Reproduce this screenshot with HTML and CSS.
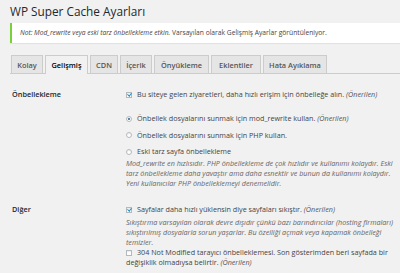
FILE: index.html
```html
<!DOCTYPE html>
<html lang="tr">
<head>
<meta charset="utf-8">
<title>WP Super Cache Ayarları</title>
<link rel="stylesheet" href="styles.css">
</head>
<body>
<div class="wrap">
  <h1 class="title">WP Super Cache Ayarları</h1>
  <div class="notice">
    <p><em>Not: Mod_rewrite veya eski tarz önbellekleme etkin.</em> Varsayılan olarak Gelişmiş Ayarlar görüntüleniyor.</p>
  </div>
  <nav class="tabs">
    <a class="tab">Kolay</a>
    <a class="tab active">Gelişmiş</a>
    <a class="tab">CDN</a>
    <a class="tab">İçerik</a>
    <a class="tab">Önyükleme</a>
    <a class="tab">Eklentiler</a>
    <a class="tab">Hata Ayıklama</a>
  </nav>

  <section class="row row-cache">
    <div class="label">Önbellekleme</div>
    <div class="field">
      <p class="line"><span class="cb checked"></span>Bu siteye gelen ziyaretleri, daha hızlı erişim için önbelleğe alın. <em class="rec">(Önerilen)</em></p>
      <ul class="radios">
        <li class="line"><span class="rb checked"></span>Önbellek dosyalarını sunmak için mod_rewrite kullan. <em class="rec">(Önerilen)</em></li>
        <li class="line"><span class="rb"></span>Önbellek dosyalarını sunmak için PHP kullan.</li>
        <li class="line"><span class="rb"></span>Eski tarz sayfa önbellekleme</li>
      </ul>
      <p class="desc">Mod_rewrite en hızlısıdır. PHP önbellekleme de çok hızlıdır ve kullanımı kolaydır. Eski tarz önbellekleme daha yavaştır ama daha esnektir ve bunun da kullanımı kolaydır. Yeni kullanıcılar PHP önbelleklemeyi denemelidir.</p>
    </div>
  </section>

  <section class="row row-other">
    <div class="label">Diğer</div>
    <div class="field">
      <p class="line"><span class="cb checked"></span>Sayfalar daha hızlı yüklensin diye sayfaları sıkıştır. <em class="rec">(Önerilen)</em></p>
      <p class="desc desc2">Sıkıştırma varsayılan olarak devre dışıdır çünkü bazı barındırıcılar (hosting firmaları) sıkıştırılmış dosyalarla sorun yaşarlar. Bu özelliği açmak veya kapamak önbelleği temizler.</p>
      <p class="line wrapline"><span class="cb"></span>304 Not Modified tarayıcı önbelleklemesi. Son gösterimden beri sayfada bir değişiklik olmadıysa belirtir. <em class="rec">(Önerilen)</em></p>
    </div>
  </section>
</div>
</body>
</html>
```

FILE: styles.css
```css
html, body {
  margin: 0;
  padding: 0;
}
body {
  background: #f1f1f1;
  color: #444;
  font-family: "Open Sans", "Noto Sans", sans-serif;
  font-size: 7.2px;
  line-height: 10px;
  overflow: hidden;
}
.wrap {
  padding: 0 0 0 10px;
}
.title {
  margin: 0;
  height: 23px;
  padding-top: 3px;
  box-sizing: border-box;
  font-size: 11.8px;
  line-height: 16px;
  font-weight: 400;
  color: #23282d;
}
.notice {
  margin-right: -10px;
  height: 20px;
  background: #fff;
  border-left: 2px solid #7ad03a;
  box-shadow: 0 1px 1px rgba(0,0,0,.06);
  display: flex;
  align-items: center;
  padding-left: 8px;
}
.notice p {
  margin: 0;
  font-size: 6.7px;
  color: #444;
}
.tabs {
  margin-top: 12px;
  margin-right: -10px;
  display: flex;
  gap: 2px;
  padding-left: 1px;
  border-bottom: 1px solid #ccc;
  height: 18px;
}
.tab {
  display: flex;
  align-items: center;
  justify-content: center;
  height: 18px;
  box-sizing: border-box;
  padding: 0 4px;
  border: 1px solid #ccc;
  border-bottom: none;
  background: #e5e5e5;
  color: #555;
  font-size: 7.4px;
  font-weight: 600;
  white-space: nowrap;
}
.tab:nth-child(1) { width: 32px; }
.tab:nth-child(2) { width: 43px; }
.tab:nth-child(3) { width: 28px; }
.tab:nth-child(4) { width: 32px; }
.tab:nth-child(5) { width: 55px; }
.tab:nth-child(6) { width: 50px; }
.tab:nth-child(7) { width: 64px; }
.tab.active {
  background: #f1f1f1;
  color: #000;
  height: 19px;
}
.row {
  display: grid;
  grid-template-columns: 116px 1fr;
}
.row-cache {
  margin-top: 15px;
}
.row-other {
  margin-top: 16px;
}
.label {
  padding-left: 2px;
  font-weight: 600;
  color: #23282d;
  font-size: 7.3px;
}
.field p, .field ul {
  margin: 0;
  padding: 0;
  list-style: none;
}
.line {
  line-height: 10px;
}
.radios {
  margin-top: 14px !important;
  display: flex;
  flex-direction: column;
  gap: 6.5px;
}
.desc {
  margin-top: 2px !important;
  font-style: italic;
  color: #666;
}
.desc2 {
  margin-top: 3px !important;
}
.wrapline {
  margin-top: 0;
}
.rec {
  color: #555;
}
.cb, .rb {
  display: inline-block;
  width: 6px;
  height: 6px;
  box-sizing: border-box;
  border: 1px solid #b4b9be;
  background: #fff;
  vertical-align: -0.5px;
  margin-right: 5px;
  position: relative;
  box-shadow: inset 0 1px 1px rgba(0,0,0,.08);
}
.rb {
  border-radius: 50%;
}
.cb.checked::after {
  content: "";
  position: absolute;
  left: 1px;
  top: -0.5px;
  width: 1.6px;
  height: 3.2px;
  border: solid #1e8cbe;
  border-width: 0 1.1px 1.1px 0;
  transform: rotate(40deg);
}
.rb.checked::after {
  content: "";
  position: absolute;
  left: 1px;
  top: 1px;
  width: 2px;
  height: 2px;
  border-radius: 50%;
  background: #2c5b87;
}
```
